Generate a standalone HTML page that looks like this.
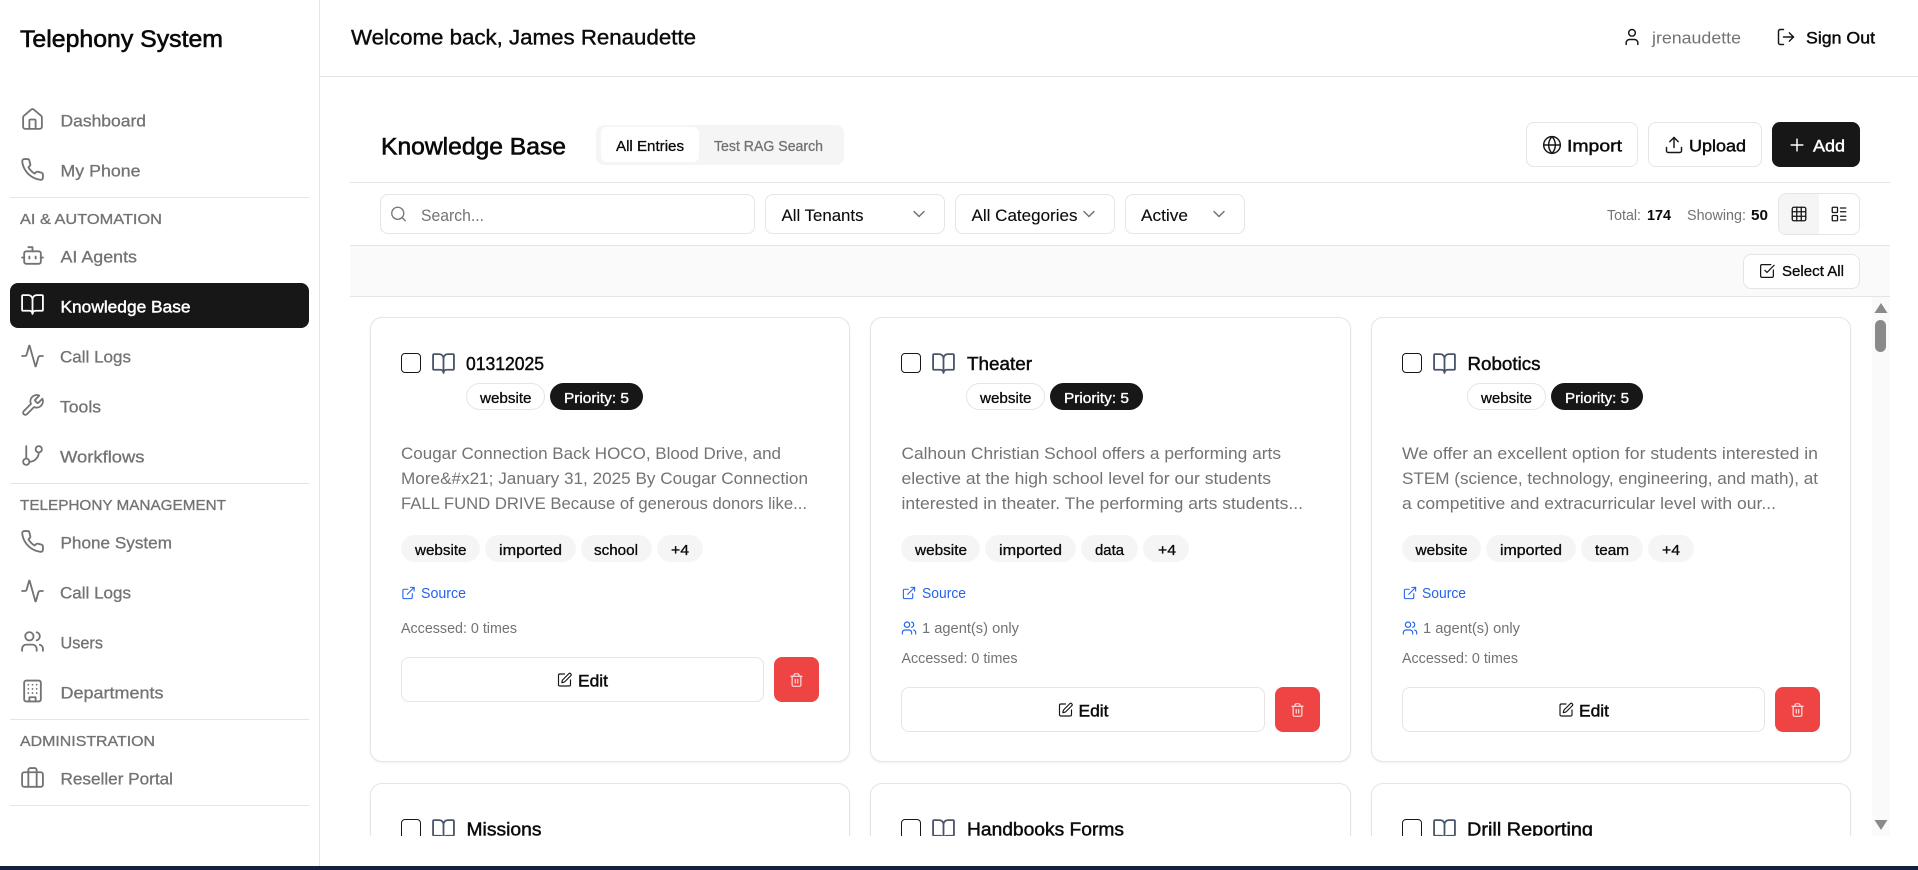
<!DOCTYPE html>
<html lang="en">
<head>
<meta charset="utf-8">
<title>Telephony System – Knowledge Base</title>
<style>
html,body{margin:0;padding:0;width:1918px;height:870px;overflow:hidden;background:#fff}
body{position:relative;font-family:"Liberation Sans",Arial,sans-serif}
.a{position:absolute;box-sizing:border-box}
.bd{border:1px solid #e5e5e5;background:#fff;border-radius:8px}
.h{height:1px;background:#e5e5e5}
.card{border:1px solid #e5e5e5;border-radius:12px;background:#fff;box-shadow:0 1px 2px rgba(0,0,0,.06)}
.cb{width:20px;height:20px;border:1.2px solid #171717;border-radius:4px;background:#fff}
.pill{height:27px;border-radius:14px}
.tag{background:#f5f5f5}
.bl{background:#171717}
.red{background:#ef4444;border-radius:8px}
svg.o{position:absolute;left:0;top:0;width:1918px;height:870px;pointer-events:none}
text{font-family:"Liberation Sans",Arial,sans-serif;white-space:pre}
.ic{fill:none;stroke-width:1.75;stroke-linecap:round;stroke-linejoin:round}
.n{font-size:17px;fill:#737373;stroke:#737373;stroke-width:.3}
.nw{font-size:17px;fill:#fff;stroke:#fff;stroke-width:.45}
.s{font-size:14.4px;fill:#737373;stroke:#737373;stroke-width:.3}
.t{font-size:24px;fill:#0a0a0a;stroke:#0a0a0a;stroke-width:.6}
.w{font-size:21.6px;fill:#0a0a0a;stroke:#0a0a0a;stroke-width:.4}
.m{font-size:17px;fill:#0a0a0a;stroke:#0a0a0a;stroke-width:.45}
.r{font-size:17px;fill:#0a0a0a;stroke:#0a0a0a;stroke-width:.1}
.g{font-size:17px;fill:#737373}
.sm{font-size:14.4px;fill:#737373}
.smk{font-size:14.4px;fill:#0a0a0a;stroke:#0a0a0a;stroke-width:.3}
.smb{font-size:14.4px;fill:#0a0a0a;font-weight:700}
.smw{font-size:14.4px;fill:#fff;stroke:#fff;stroke-width:.35}
.ti{font-size:18.5px;fill:#0a0a0a;stroke:#0a0a0a;stroke-width:.45}
.li{font-size:14.4px;fill:#2563eb}
</style>
</head>
<body>

<!-- Frame -->
<div class="a" style="left:319px;top:0;width:1px;height:866px;background:#e5e5e5"></div>
<div class="a h" style="left:320px;top:76px;width:1598px"></div>
<div class="a" style="left:0;top:866px;width:1918px;height:4px;background:#13203f"></div>

<!-- Sidebar -->
<div class="a h" style="left:10px;top:197px;width:299px"></div>
<div class="a bl" style="left:10px;top:283px;width:299px;height:45px;border-radius:8px"></div>
<div class="a h" style="left:10px;top:483px;width:299px"></div>
<div class="a h" style="left:10px;top:719px;width:299px"></div>
<div class="a h" style="left:10px;top:805px;width:299px"></div>

<!-- Toolbar -->
<div class="a" style="left:596px;top:125px;width:248px;height:40px;background:#f5f5f5;border-radius:8px"></div>
<div class="a" style="left:601px;top:127px;width:98px;height:35px;background:#fff;border-radius:6px"></div>
<div class="a bd" style="left:1526px;top:122px;width:112px;height:45px"></div>
<div class="a bd" style="left:1648px;top:122px;width:114px;height:45px"></div>
<div class="a bl" style="left:1772px;top:122px;width:88px;height:45px;border-radius:8px"></div>
<div class="a h" style="left:350px;top:182px;width:1540px"></div>

<div class="a bd" style="left:380px;top:194px;width:375px;height:40px"></div>
<div class="a bd" style="left:765px;top:194px;width:180px;height:40px"></div>
<div class="a bd" style="left:955px;top:194px;width:160px;height:40px"></div>
<div class="a bd" style="left:1125px;top:194px;width:120px;height:40px"></div>
<div class="a bd" style="left:1778px;top:193px;width:82px;height:42px;overflow:hidden"><div style="width:40px;height:100%;background:#f5f5f5"></div></div>

<div class="a h" style="left:350px;top:245px;width:1540px"></div>
<div class="a" style="left:350px;top:246px;width:1540px;height:50px;background:#fafafa"></div>
<div class="a h" style="left:350px;top:296px;width:1540px"></div>
<div class="a bd" style="left:1743px;top:254px;width:117px;height:35px"></div>

<!-- Scrollbar -->
<div class="a" style="left:1872px;top:297px;width:18px;height:539px;background:#fafafa"></div>
<div class="a" style="left:1875px;top:320px;width:11px;height:32px;background:#8a8a8a;border-radius:6px"></div>

<!-- Cards -->
<div class="a" style="left:0;top:0;width:1918px;height:870px;overflow:hidden;clip-path:inset(297px 0 34px 0)">
  <div class="a card" style="left:370px;top:317px;width:480px;height:445px"></div>
  <div class="a card" style="left:870px;top:317px;width:481px;height:445px"></div>
  <div class="a card" style="left:1371px;top:317px;width:480px;height:445px"></div>
  <div class="a card" style="left:370px;top:783px;width:480px;height:80px"></div>
  <div class="a card" style="left:870px;top:783px;width:481px;height:80px"></div>
  <div class="a card" style="left:1371px;top:783px;width:480px;height:80px"></div>

  <div class="a cb" style="left:401px;top:353px"></div>
  <div class="a cb" style="left:901px;top:353px"></div>
  <div class="a cb" style="left:1402px;top:353px"></div>
  <div class="a cb" style="left:401px;top:819px"></div>
  <div class="a cb" style="left:901px;top:819px"></div>
  <div class="a cb" style="left:1402px;top:819px"></div>

  <div class="a pill bd" style="left:466px;top:383px;width:79px;border-radius:14px"></div>
  <div class="a pill bl" style="left:550px;top:383px;width:93px"></div>
  <div class="a pill bd" style="left:966px;top:383px;width:79px;border-radius:14px"></div>
  <div class="a pill bl" style="left:1050px;top:383px;width:93px"></div>
  <div class="a pill bd" style="left:1467px;top:383px;width:79px;border-radius:14px"></div>
  <div class="a pill bl" style="left:1551px;top:383px;width:92px"></div>

  <div class="a pill tag" style="left:401px;top:535px;width:79px"></div>
  <div class="a pill tag" style="left:485px;top:535px;width:91px"></div>
  <div class="a pill tag" style="left:581px;top:535px;width:71px"></div>
  <div class="a pill tag" style="left:657px;top:535px;width:46px"></div>
  <div class="a pill tag" style="left:901px;top:535px;width:79px"></div>
  <div class="a pill tag" style="left:985px;top:535px;width:91px"></div>
  <div class="a pill tag" style="left:1081px;top:535px;width:57px"></div>
  <div class="a pill tag" style="left:1143px;top:535px;width:46px"></div>
  <div class="a pill tag" style="left:1402px;top:535px;width:79px"></div>
  <div class="a pill tag" style="left:1486px;top:535px;width:90px"></div>
  <div class="a pill tag" style="left:1581px;top:535px;width:62px"></div>
  <div class="a pill tag" style="left:1648px;top:535px;width:46px"></div>

  <div class="a bd" style="left:401px;top:657px;width:363px;height:45px"></div>
  <div class="a red" style="left:774px;top:657px;width:45px;height:45px"></div>
  <div class="a bd" style="left:901px;top:687px;width:364px;height:45px"></div>
  <div class="a red" style="left:1275px;top:687px;width:45px;height:45px"></div>
  <div class="a bd" style="left:1402px;top:687px;width:363px;height:45px"></div>
  <div class="a red" style="left:1775px;top:687px;width:45px;height:45px"></div>
</div>

<svg class="o" viewBox="0 0 1918 870" xmlns="http://www.w3.org/2000/svg">
<defs>
<symbol id="i-house" viewBox="0 0 24 24"><path d="M15 21v-8a1 1 0 0 0-1-1h-4a1 1 0 0 0-1 1v8"/><path d="M3 10a2 2 0 0 1 .709-1.528l7-5.999a2 2 0 0 1 2.582 0l7 5.999A2 2 0 0 1 21 10v9a2 2 0 0 1-2 2H5a2 2 0 0 1-2-2z"/></symbol>
<symbol id="i-phone" viewBox="0 0 24 24"><path d="M22 16.92v3a2 2 0 0 1-2.18 2 19.79 19.79 0 0 1-8.63-3.07 19.5 19.5 0 0 1-6-6 19.79 19.79 0 0 1-3.07-8.67A2 2 0 0 1 4.11 2h3a2 2 0 0 1 2 1.72 12.84 12.84 0 0 0 .7 2.81 2 2 0 0 1-.45 2.11L8.09 9.91a16 16 0 0 0 6 6l1.27-1.27a2 2 0 0 1 2.11-.45 12.84 12.84 0 0 0 2.81.7A2 2 0 0 1 22 16.92z"/></symbol>
<symbol id="i-bot" viewBox="0 0 24 24"><path d="M12 8V4H8"/><rect width="16" height="12" x="4" y="8" rx="2"/><path d="M2 14h2"/><path d="M20 14h2"/><path d="M15 13v2"/><path d="M9 13v2"/></symbol>
<symbol id="i-book" viewBox="0 0 24 24"><path d="M12 7v14"/><path d="M3 18a1 1 0 0 1-1-1V4a1 1 0 0 1 1-1h5a4 4 0 0 1 4 4 4 4 0 0 1 4-4h5a1 1 0 0 1 1 1v13a1 1 0 0 1-1 1h-6a3 3 0 0 0-3 3 3 3 0 0 0-3-3z"/></symbol>
<symbol id="i-act" viewBox="0 0 24 24"><path d="M22 12h-2.48a2 2 0 0 0-1.93 1.46l-2.35 8.36a.25.25 0 0 1-.48 0L9.24 2.18a.25.25 0 0 0-.48 0l-2.35 8.36A2 2 0 0 1 4.49 12H2"/></symbol>
<symbol id="i-wrench" viewBox="0 0 24 24"><path d="M14.7 6.3a1 1 0 0 0 0 1.4l1.6 1.6a1 1 0 0 0 1.4 0l3.77-3.77a6 6 0 0 1-7.94 7.94l-6.91 6.91a2.12 2.12 0 0 1-3-3l6.91-6.91a6 6 0 0 1 7.94-7.94l-3.76 3.76z"/></symbol>
<symbol id="i-branch" viewBox="0 0 24 24"><line x1="6" x2="6" y1="3" y2="15"/><circle cx="18" cy="6" r="3"/><circle cx="6" cy="18" r="3"/><path d="M18 9a9 9 0 0 1-9 9"/></symbol>
<symbol id="i-users" viewBox="0 0 24 24"><path d="M16 21v-2a4 4 0 0 0-4-4H6a4 4 0 0 0-4 4v2"/><circle cx="9" cy="7" r="4"/><path d="M22 21v-2a4 4 0 0 0-3-3.87"/><path d="M16 3.13a4 4 0 0 1 0 7.75"/></symbol>
<symbol id="i-build" viewBox="0 0 24 24"><rect width="16" height="20" x="4" y="2" rx="2"/><path d="M9 22v-4h6v4"/><path d="M8 6h.01M16 6h.01M12 6h.01M12 10h.01M12 14h.01M16 10h.01M16 14h.01M8 10h.01M8 14h.01"/></symbol>
<symbol id="i-case" viewBox="0 0 24 24"><path d="M16 20V4a2 2 0 0 0-2-2h-4a2 2 0 0 0-2 2v16"/><rect width="20" height="14" x="2" y="6" rx="2"/></symbol>
<symbol id="i-user" viewBox="0 0 24 24"><path d="M19 21v-2a4 4 0 0 0-4-4H9a4 4 0 0 0-4 4v2"/><circle cx="12" cy="7" r="4"/></symbol>
<symbol id="i-out" viewBox="0 0 24 24"><path d="M9 21H5a2 2 0 0 1-2-2V5a2 2 0 0 1 2-2h4"/><polyline points="16 17 21 12 16 7"/><line x1="21" x2="9" y1="12" y2="12"/></symbol>
<symbol id="i-globe" viewBox="0 0 24 24"><circle cx="12" cy="12" r="10"/><path d="M12 2a14.5 14.5 0 0 0 0 20 14.5 14.5 0 0 0 0-20"/><path d="M2 12h20"/></symbol>
<symbol id="i-up" viewBox="0 0 24 24"><path d="M21 15v4a2 2 0 0 1-2 2H5a2 2 0 0 1-2-2v-4"/><polyline points="17 8 12 3 7 8"/><line x1="12" x2="12" y1="3" y2="15"/></symbol>
<symbol id="i-plus" viewBox="0 0 24 24"><path d="M5 12h14"/><path d="M12 5v14"/></symbol>
<symbol id="i-search" viewBox="0 0 24 24"><circle cx="11" cy="11" r="8"/><path d="m21 21-4.3-4.3"/></symbol>
<symbol id="i-chev" viewBox="0 0 24 24"><path d="m6 9 6 6 6-6"/></symbol>
<symbol id="i-grid" viewBox="0 0 24 24"><rect width="18" height="18" x="3" y="3" rx="2"/><path d="M3 9h18M3 15h18M9 3v18M15 3v18"/></symbol>
<symbol id="i-list" viewBox="0 0 24 24"><rect width="7" height="7" x="3" y="3" rx="1"/><rect width="7" height="7" x="3" y="14" rx="1"/><path d="M14 4h7M14 9h7M14 15h7M14 20h7"/></symbol>
<symbol id="i-check" viewBox="0 0 24 24"><path d="M21 10.656V19a2 2 0 0 1-2 2H5a2 2 0 0 1-2-2V5a2 2 0 0 1 2-2h12.344"/><path d="m9 11 3 3L22 4"/></symbol>
<symbol id="i-ext" viewBox="0 0 24 24"><path d="M15 3h6v6"/><path d="M10 14 21 3"/><path d="M18 13v6a2 2 0 0 1-2 2H5a2 2 0 0 1-2-2V8a2 2 0 0 1 2-2h6"/></symbol>
<symbol id="i-edit" viewBox="0 0 24 24"><path d="M12 3H5a2 2 0 0 0-2 2v14a2 2 0 0 0 2 2h14a2 2 0 0 0 2-2v-7"/><path d="M18.375 2.625a1 1 0 0 1 3 3l-9.013 9.014a2 2 0 0 1-.853.505l-2.873.84a.5.5 0 0 1-.62-.62l.84-2.873a2 2 0 0 1 .506-.852z"/></symbol>
<symbol id="i-trash" viewBox="0 0 24 24"><path d="M3 6h18"/><path d="M19 6v14c0 1-1 2-2 2H7c-1 0-2-1-2-2V6"/><path d="M8 6V4c0-1 1-2 2-2h4c1 0 2 1 2 2v2"/><line x1="10" x2="10" y1="11" y2="17"/><line x1="14" x2="14" y1="11" y2="17"/></symbol>
<clipPath id="scroll"><rect x="0" y="297" width="1918" height="539"/></clipPath>
</defs>

<!-- Sidebar text -->
<text x="20" y="47" class="t" textLength="203" lengthAdjust="spacingAndGlyphs">Telephony System</text>
<text x="60.5" y="126.5" class="n" textLength="85.5" lengthAdjust="spacingAndGlyphs">Dashboard</text>
<text x="60.5" y="176.5" class="n" textLength="80" lengthAdjust="spacingAndGlyphs">My Phone</text>
<text x="20" y="224" class="s" textLength="142" lengthAdjust="spacingAndGlyphs">AI &amp; AUTOMATION</text>
<text x="60.5" y="262.5" class="n" textLength="76.5" lengthAdjust="spacingAndGlyphs">AI Agents</text>
<text x="60.5" y="312.5" class="nw" textLength="130" lengthAdjust="spacingAndGlyphs">Knowledge Base</text>
<text x="60" y="362.5" class="n" textLength="71" lengthAdjust="spacingAndGlyphs">Call Logs</text>
<text x="60" y="412.5" class="n" textLength="41" lengthAdjust="spacingAndGlyphs">Tools</text>
<text x="60" y="462.5" class="n" textLength="84.5" lengthAdjust="spacingAndGlyphs">Workflows</text>
<text x="20" y="510" class="s" textLength="206" lengthAdjust="spacingAndGlyphs">TELEPHONY MANAGEMENT</text>
<text x="60.5" y="548.5" class="n" textLength="111.5" lengthAdjust="spacingAndGlyphs">Phone System</text>
<text x="60" y="598.5" class="n" textLength="71" lengthAdjust="spacingAndGlyphs">Call Logs</text>
<text x="60.5" y="648.5" class="n" textLength="42.5" lengthAdjust="spacingAndGlyphs">Users</text>
<text x="60.5" y="698.5" class="n" textLength="103" lengthAdjust="spacingAndGlyphs">Departments</text>
<text x="20" y="746" class="s" textLength="135" lengthAdjust="spacingAndGlyphs">ADMINISTRATION</text>
<text x="60.5" y="784.5" class="n" textLength="112.5" lengthAdjust="spacingAndGlyphs">Reseller Portal</text>

<!-- Sidebar icons -->
<g class="ic" stroke="#737373">
<use href="#i-house" x="20" y="107" width="25" height="25"/>
<use href="#i-phone" x="20" y="157" width="25" height="25"/>
<use href="#i-bot" x="20" y="243" width="25" height="25"/>
<use href="#i-act" x="20" y="343.5" width="25" height="25"/>
<use href="#i-wrench" x="20" y="393" width="25" height="25"/>
<use href="#i-branch" x="20" y="443" width="25" height="25"/>
<use href="#i-phone" x="20" y="529" width="25" height="25"/>
<use href="#i-act" x="20" y="578.5" width="25" height="25"/>
<use href="#i-users" x="20" y="629" width="25" height="25"/>
<use href="#i-build" x="20" y="678.5" width="25" height="25"/>
<use href="#i-case" x="20" y="766" width="25" height="25"/>
</g>
<g class="ic" stroke="#fff"><use href="#i-book" x="20" y="292" width="25" height="25"/></g>

<!-- Header -->
<text x="351" y="44.5" class="w" textLength="345" lengthAdjust="spacingAndGlyphs">Welcome back, James Renaudette</text>
<text x="1652" y="43.5" class="g" textLength="89" lengthAdjust="spacingAndGlyphs">jrenaudette</text>
<text x="1806" y="43.5" class="m" textLength="69" lengthAdjust="spacingAndGlyphs">Sign Out</text>
<g class="ic" stroke="#171717">
<use href="#i-user" x="1622" y="27" width="20" height="20"/>
<use href="#i-out" x="1776" y="27" width="20" height="20"/>
<use href="#i-globe" x="1542" y="135" width="20" height="20"/>
<use href="#i-up" x="1664" y="135" width="20" height="20"/>
<use href="#i-grid" x="1790" y="205" width="18" height="18"/>
<use href="#i-list" x="1830" y="205" width="18" height="18"/>
<use href="#i-check" x="1758.5" y="262.5" width="17" height="17"/>
</g>
<g class="ic" stroke="#fff"><use href="#i-plus" x="1787" y="135" width="20" height="20"/></g>

<!-- Toolbar text -->
<text x="381" y="154.5" class="t" textLength="185" lengthAdjust="spacingAndGlyphs">Knowledge Base</text>
<text x="616" y="151" class="smk" textLength="68" lengthAdjust="spacingAndGlyphs">All Entries</text>
<text x="714" y="151" class="s" textLength="109" lengthAdjust="spacingAndGlyphs">Test RAG Search</text>
<text x="1567" y="151.5" class="m" textLength="55" lengthAdjust="spacingAndGlyphs">Import</text>
<text x="1689" y="151.5" class="m" textLength="57" lengthAdjust="spacingAndGlyphs">Upload</text>
<text x="1813" y="151.5" class="nw" textLength="32" lengthAdjust="spacingAndGlyphs">Add</text>

<text x="421" y="221" class="g" textLength="63" lengthAdjust="spacingAndGlyphs">Search...</text>
<text x="781.5" y="221" class="r" textLength="82" lengthAdjust="spacingAndGlyphs">All Tenants</text>
<text x="971.5" y="221" class="r" textLength="106" lengthAdjust="spacingAndGlyphs">All Categories</text>
<text x="1141" y="221" class="r" textLength="47" lengthAdjust="spacingAndGlyphs">Active</text>
<g class="ic" stroke="#737373">
<use href="#i-search" x="389.5" y="205" width="18" height="18"/>
<use href="#i-chev" x="909" y="204" width="20" height="20"/>
<use href="#i-chev" x="1079" y="204" width="20" height="20"/>
<use href="#i-chev" x="1209" y="204" width="20" height="20"/>
</g>

<text x="1607" y="220" class="sm" textLength="34" lengthAdjust="spacingAndGlyphs">Total:</text>
<text x="1647" y="220" class="smb" textLength="24" lengthAdjust="spacingAndGlyphs">174</text>
<text x="1687" y="220" class="sm" textLength="59" lengthAdjust="spacingAndGlyphs">Showing:</text>
<text x="1751" y="220" class="smb" textLength="17" lengthAdjust="spacingAndGlyphs">50</text>
<text x="1782" y="276" class="smk" textLength="62" lengthAdjust="spacingAndGlyphs">Select All</text>

<!-- Scrollbar arrows -->
<path d="M1881 303l6.5 10h-13z" fill="#8a8a8a"/>
<path d="M1881 830l-6.5-10h13z" fill="#8a8a8a"/>

<!-- Card contents -->
<g clip-path="url(#scroll)">
<!-- Book icons -->
<g class="ic" stroke="#475569">
<use href="#i-book" x="431" y="351" width="25" height="25"/>
<use href="#i-book" x="931" y="351" width="25" height="25"/>
<use href="#i-book" x="1432" y="351" width="25" height="25"/>
<use href="#i-book" x="431" y="817" width="25" height="25"/>
<use href="#i-book" x="931" y="817" width="25" height="25"/>
<use href="#i-book" x="1432" y="817" width="25" height="25"/>
</g>

<!-- Titles -->
<text x="466" y="370" class="ti" textLength="78" lengthAdjust="spacingAndGlyphs">01312025</text>
<text x="967" y="370" class="ti" textLength="65" lengthAdjust="spacingAndGlyphs">Theater</text>
<text x="1467.5" y="370" class="ti" textLength="73" lengthAdjust="spacingAndGlyphs">Robotics</text>
<text x="466.5" y="835.5" class="ti" textLength="75" lengthAdjust="spacingAndGlyphs">Missions</text>
<text x="967" y="835.5" class="ti" textLength="157" lengthAdjust="spacingAndGlyphs">Handbooks Forms</text>
<text x="1467" y="835.5" class="ti" textLength="126" lengthAdjust="spacingAndGlyphs">Drill Reporting</text>

<!-- Badges -->
<text x="480" y="403" class="smk" textLength="51.5" lengthAdjust="spacingAndGlyphs">website</text>
<text x="564" y="403" class="smw" textLength="65" lengthAdjust="spacingAndGlyphs">Priority: 5</text>
<text x="980" y="403" class="smk" textLength="51.5" lengthAdjust="spacingAndGlyphs">website</text>
<text x="1064" y="403" class="smw" textLength="65" lengthAdjust="spacingAndGlyphs">Priority: 5</text>
<text x="1481" y="403" class="smk" textLength="51" lengthAdjust="spacingAndGlyphs">website</text>
<text x="1565" y="403" class="smw" textLength="64" lengthAdjust="spacingAndGlyphs">Priority: 5</text>

<!-- Descriptions -->
<text x="401" y="459" class="g" textLength="380" lengthAdjust="spacingAndGlyphs">Cougar Connection Back HOCO, Blood Drive, and</text>
<text x="401" y="484" class="g" textLength="407" lengthAdjust="spacingAndGlyphs">More&amp;#x21; January 31, 2025 By Cougar Connection</text>
<text x="401" y="509" class="g" textLength="406" lengthAdjust="spacingAndGlyphs">FALL FUND DRIVE Because of generous donors like...</text>

<text x="901.5" y="459" class="g" textLength="379.5" lengthAdjust="spacingAndGlyphs">Calhoun Christian School offers a performing arts</text>
<text x="901.5" y="484" class="g" textLength="369.5" lengthAdjust="spacingAndGlyphs">elective at the high school level for our students</text>
<text x="901.5" y="509" class="g" textLength="401.5" lengthAdjust="spacingAndGlyphs">interested in theater. The performing arts students...</text>

<text x="1402" y="459" class="g" textLength="416" lengthAdjust="spacingAndGlyphs">We offer an excellent option for students interested in</text>
<text x="1402" y="484" class="g" textLength="416" lengthAdjust="spacingAndGlyphs">STEM (science, technology, engineering, and math), at</text>
<text x="1402" y="509" class="g" textLength="374" lengthAdjust="spacingAndGlyphs">a competitive and extracurricular level with our...</text>

<!-- Tags -->
<text x="415" y="555" class="smk" textLength="51.5" lengthAdjust="spacingAndGlyphs">website</text>
<text x="499" y="555" class="smk" textLength="63" lengthAdjust="spacingAndGlyphs">imported</text>
<text x="594" y="555" class="smk" textLength="44" lengthAdjust="spacingAndGlyphs">school</text>
<text x="671" y="555" class="smk" textLength="18" lengthAdjust="spacingAndGlyphs">+4</text>
<text x="915" y="555" class="smk" textLength="52" lengthAdjust="spacingAndGlyphs">website</text>
<text x="999" y="555" class="smk" textLength="63" lengthAdjust="spacingAndGlyphs">imported</text>
<text x="1095" y="555" class="smk" textLength="29" lengthAdjust="spacingAndGlyphs">data</text>
<text x="1158" y="555" class="smk" textLength="18" lengthAdjust="spacingAndGlyphs">+4</text>
<text x="1415.5" y="555" class="smk" textLength="52" lengthAdjust="spacingAndGlyphs">website</text>
<text x="1500" y="555" class="smk" textLength="62" lengthAdjust="spacingAndGlyphs">imported</text>
<text x="1595" y="555" class="smk" textLength="34" lengthAdjust="spacingAndGlyphs">team</text>
<text x="1662" y="555" class="smk" textLength="18" lengthAdjust="spacingAndGlyphs">+4</text>

<!-- Source links -->
<g class="ic" stroke="#2563eb">
<use href="#i-ext" x="401" y="585.5" width="15" height="15"/>
<use href="#i-ext" x="901.5" y="585.5" width="15" height="15"/>
<use href="#i-ext" x="1402.5" y="585.5" width="15" height="15"/>
<use href="#i-users" x="901" y="620" width="16" height="16"/>
<use href="#i-users" x="1402" y="620" width="16" height="16"/>
</g>
<text x="421" y="598" class="li" textLength="45" lengthAdjust="spacingAndGlyphs">Source</text>
<text x="922" y="598" class="li" textLength="44" lengthAdjust="spacingAndGlyphs">Source</text>
<text x="1422" y="598" class="li" textLength="44" lengthAdjust="spacingAndGlyphs">Source</text>

<text x="401" y="633" class="sm" textLength="116" lengthAdjust="spacingAndGlyphs">Accessed: 0 times</text>
<text x="922" y="633" class="sm" textLength="97" lengthAdjust="spacingAndGlyphs">1 agent(s) only</text>
<text x="901.5" y="663" class="sm" textLength="116" lengthAdjust="spacingAndGlyphs">Accessed: 0 times</text>
<text x="1423" y="633" class="sm" textLength="97" lengthAdjust="spacingAndGlyphs">1 agent(s) only</text>
<text x="1402" y="663" class="sm" textLength="116" lengthAdjust="spacingAndGlyphs">Accessed: 0 times</text>

<!-- Actions -->
<g class="ic" stroke="#171717">
<use href="#i-edit" x="556.5" y="672" width="16" height="16"/>
<use href="#i-edit" x="1057.5" y="702" width="16" height="16"/>
<use href="#i-edit" x="1558" y="702" width="16" height="16"/>
</g>
<text x="578" y="686.5" class="m" textLength="30" lengthAdjust="spacingAndGlyphs">Edit</text>
<text x="1078.5" y="716.5" class="m" textLength="30" lengthAdjust="spacingAndGlyphs">Edit</text>
<text x="1579" y="716.5" class="m" textLength="30" lengthAdjust="spacingAndGlyphs">Edit</text>
<g class="ic" stroke="#fff" opacity=".9">
<use href="#i-trash" x="789" y="672.5" width="15" height="15"/>
<use href="#i-trash" x="1290" y="702.5" width="15" height="15"/>
<use href="#i-trash" x="1790" y="702.5" width="15" height="15"/>
</g>
</g>
</svg>
</body>
</html>
